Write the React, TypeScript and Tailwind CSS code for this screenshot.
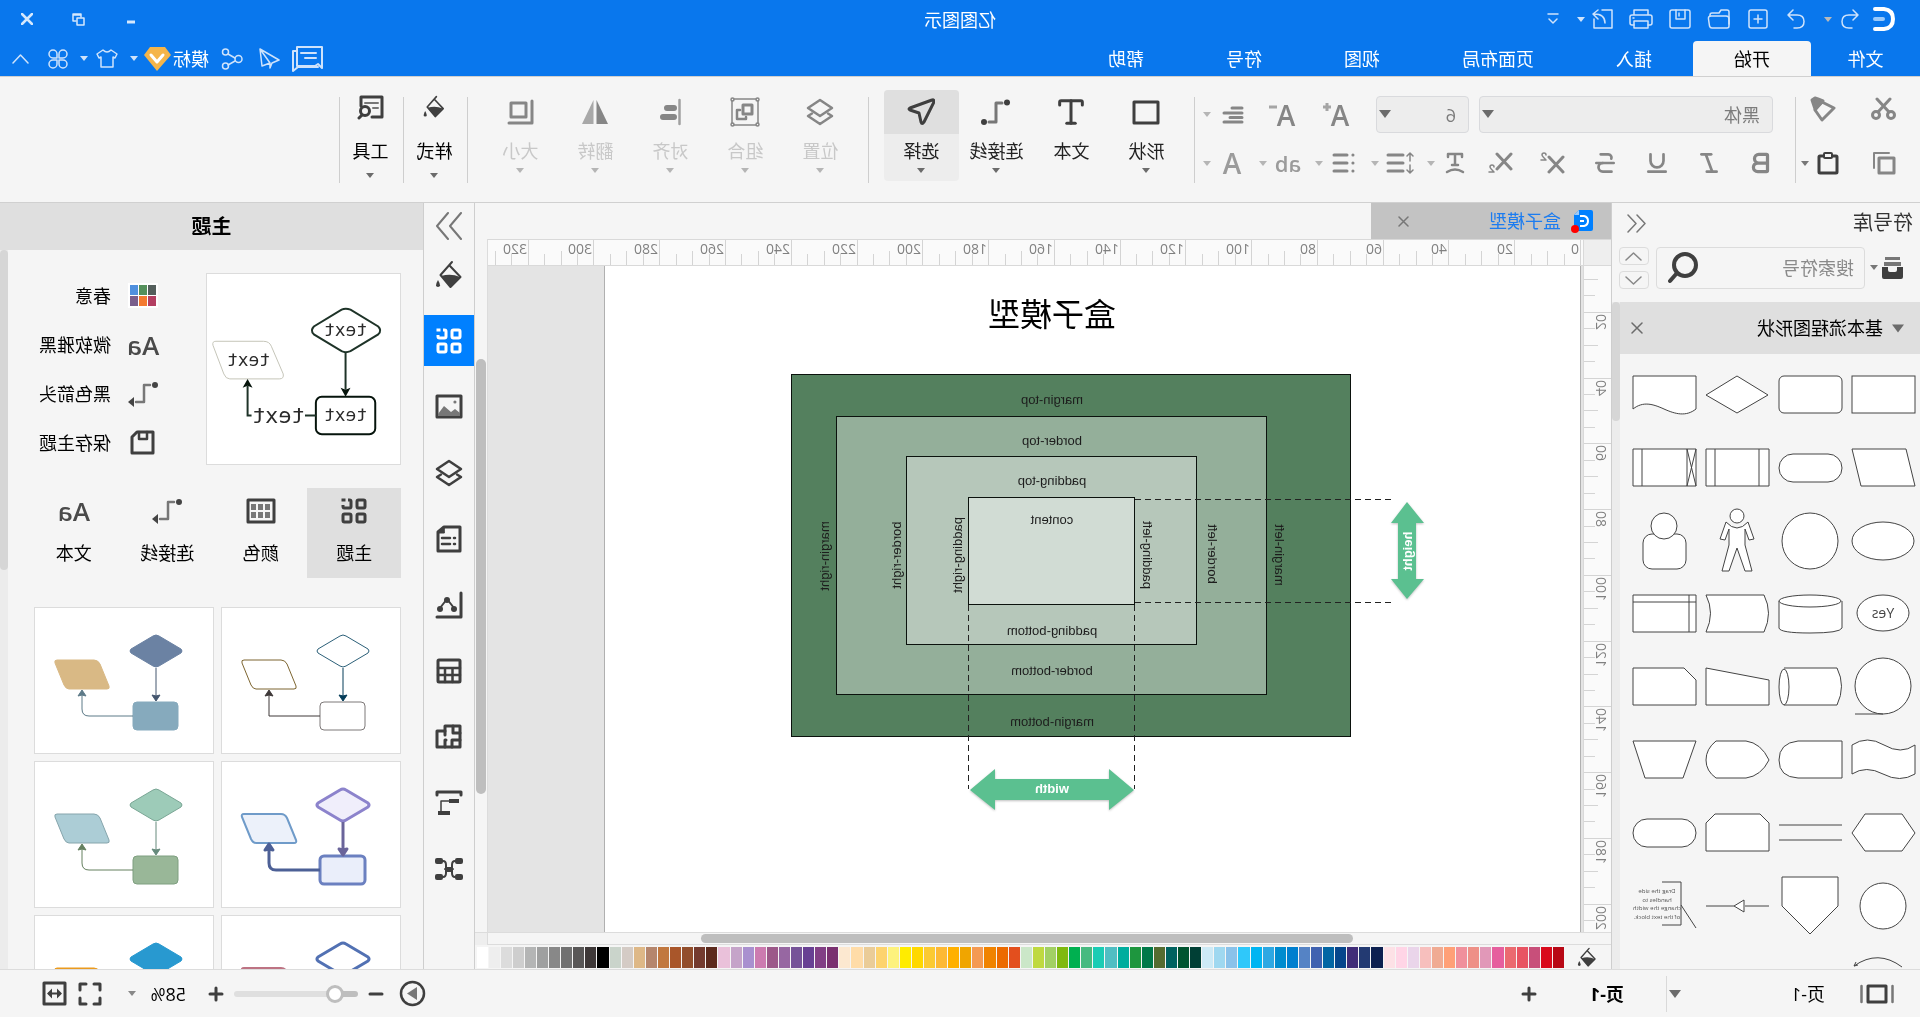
import { useState } from "react";
import type { ReactNode } from "react";
import clsx from "clsx";
import { Bold, Italic, Strikethrough, Type, Underline } from "lucide-react";

/* ---------- small helpers ---------- */

type SvgProps = {
  w?: number;
  h?: number;
  sw?: number;
  className?: string;
  children: ReactNode;
};

function Svg({ w = 24, h = 24, sw = 2, className, children }: SvgProps) {
  return (
    <svg
      width={w}
      height={h}
      viewBox={`0 0 ${w} ${h}`}
      fill="none"
      stroke="currentColor"
      strokeWidth={sw}
      strokeLinecap="round"
      strokeLinejoin="round"
      className={clsx("shrink-0", className)}
      aria-hidden="true"
    >
      {children}
    </svg>
  );
}

function Caret({ className }: { className?: string }) {
  return (
    <svg width="8" height="5" viewBox="0 0 8 5" className={clsx("shrink-0", className)} aria-hidden="true">
      <path d="M0 0h8L4 5z" fill="currentColor" />
    </svg>
  );
}

function BigCaret({ className }: { className?: string }) {
  return (
    <svg width="12" height="8" viewBox="0 0 12 8" className={clsx("shrink-0", className)} aria-hidden="true">
      <path d="M0 0h12L6 8z" fill="currentColor" />
    </svg>
  );
}

function IconButton({ label, className, children }: { label: string; className?: string; children: ReactNode }) {
  return (
    <button aria-label={label} className={clsx("flex shrink-0 items-center justify-center", className)}>
      {children}
    </button>
  );
}

/* ---------- icons ---------- */

const Bucket = ({ className }: { className?: string }) => (
  <Svg w={26} h={30} sw={2} className={className}>
    <path d="M10 2l11.500 13L11.500 27 1.500 17 12 6" />
    <path d="M2 17q9-4 19-1l-9.500 11z" fill="currentColor" stroke="none" />
    <path d="M24 20q4 7 0 7t0-7" fill="currentColor" stroke="none" />
  </Svg>
);

const GridFour = () => (
  <Svg w={26} h={26} sw={3}>
    <rect x="2" y="2" width="8" height="8" rx="1.500" />
    <path d="M19 2h-1.500q-1.500 0-1.500 1.500v5q0 1.500 1.500 1.500h5q1.500 0 1.500-1.500V7" strokeLinecap="butt" />
    <path d="M23 2h1" strokeLinecap="square" />
    <rect x="2" y="16" width="8" height="8" rx="1.500" />
    <rect x="16" y="16" width="8" height="8" rx="1.500" />
  </Svg>
);

const Layers = () => (
  <Svg w={28} h={28} sw={2.5}>
    <path d="M14 2l12 8-12 8L2 10z" />
    <path d="M6 15.500L2 18l12 8 12-8-4-2.500" />
  </Svg>
);

const LetterPair = () => (
  <span className="font-['Open_Sans',sans-serif] text-[26px] leading-6 font-semibold text-[#4a4a4a]">Aa</span>
);

const ConnectorArrow = () => (
  <Svg w={32} h={26} sw={2.5}>
    <circle cx="4" cy="4" r="3" fill="#444" stroke="none" />
    <path d="M9 4h6v17h8" stroke="#777" />
    <path d="M25 16l6 5-6 5z" fill="#444" stroke="none" />
  </Svg>
);

/* ---------- title bar ---------- */

function TitleBar() {
  return (
    <div className="relative flex h-[38px] items-center pl-[18px] text-[#cfe3fb]">
      <div className="flex w-9 justify-center">
        <Svg w={22} h={24} sw={4}>
          <path d="M20 2H11Q2 3 2 12t9 10h9" stroke="#fff" />
          <path d="M12 12h8" stroke="#9ccafa" />
        </Svg>
      </div>
      <IconButton label="撤销" className="w-8">
        <Svg w={18} h={20} sw={1.5}>
          <path d="M6 1L1 6l5 5M1 6h9q7 0 7 6.500T10 19H7" />
        </Svg>
      </IconButton>
      <Caret className="mr-2 w-3 text-[#b9b9b9]" />
      <IconButton label="恢复" className="w-9">
        <Svg w={18} h={20} sw={1.5}>
          <path d="M12 1l5 5-5 5M17 6H8q-7 0-7 6.500T8 19h3" />
        </Svg>
      </IconButton>
      <IconButton label="新建" className="w-[39px]">
        <Svg w={20} h={20} sw={1.5}>
          <rect x="1" y="1" width="18" height="18" rx="2" />
          <path d="M10 6v8M6 10h8" />
        </Svg>
      </IconButton>
      <IconButton label="打开" className="w-[39px]">
        <Svg w={24} h={20} sw={1.5}>
          <path d="M2 15V3q0-2 2-2h6l2 3h7q2 0 2 2v1" />
          <path d="M5 7h15q3 0 2.500 3l-1 7q-.5 2-2.500 2H4q-2 0-2-2V10q0-3 3-3z" />
        </Svg>
      </IconButton>
      <IconButton label="保存" className="w-[39px]">
        <Svg w={22} h={20} sw={1.5}>
          <rect x="1" y="1" width="20" height="18" rx="2" />
          <path d="M6 1v9h9V1M12 4v3" />
        </Svg>
      </IconButton>
      <IconButton label="打印" className="w-[39px]">
        <Svg w={24} h={20} sw={1.5}>
          <path d="M5 6V1h14v5M5 16H3q-2 0-2-2V8q0-2 2-2h18q2 0 2 2v6q0 2-2 2h-2" />
          <path d="M5 12h14v7H5zM19 9h1" />
        </Svg>
      </IconButton>
      <IconButton label="导出" className="w-[39px]">
        <Svg w={21} h={20} sw={1.5}>
          <path d="M11 1H1v18h18v-9" />
          <path d="M8 14q0-9 11-9M15 1l5 4-5 5" />
        </Svg>
      </IconButton>
      <Caret className="-ml-1 w-3" />
      <IconButton label="自定义快速访问工具栏" className="w-11">
        <Svg w={12} h={12} sw={1.5}>
          <path d="M1 1h10M2 6l4 4 4-4" />
        </Svg>
      </IconButton>

      <h1 className="absolute inset-x-0 top-[10px] text-center text-lg leading-5 text-white">亿图图示</h1>

      <div className="ml-auto flex items-center pr-px text-[#d5e8fd]">
        <IconButton label="最小化" className="w-[52px]">
          <Svg w={12} h={12} sw={3}>
            <path d="M2 9h8" strokeLinecap="butt" />
          </Svg>
        </IconButton>
        <IconButton label="还原" className="w-[52px]">
          <Svg w={13} h={13} sw={1.5}>
            <rect x="1" y="5" width="7" height="7" />
            <path d="M4 4V1h8v7H9M4 2h8" />
          </Svg>
        </IconButton>
        <IconButton label="关闭" className="w-[52px]">
          <Svg w={12} h={12} sw={2.5}>
            <path d="M1 1l10 10M11 1L1 11" />
          </Svg>
        </IconButton>
      </div>
    </div>
  );
}

const MENU = ["文件", "开始", "插入", "页面布局", "视图", "符号", "帮助"];

function MenuBar() {
  const [tab, setTab] = useState("开始");
  return (
    <div className="flex h-[38px] items-end text-[#cfe3fb]">
      <nav className="flex">
        {MENU.map((name) => (
          <button
            key={name}
            onClick={() => setTab(name)}
            className={clsx(
              "h-[35px] rounded-t-sm text-lg leading-9",
              name === "文件" ? "w-[109px]" : "px-[41px]",
              name === tab ? "bg-[#f5f5f5] text-black" : "text-white",
            )}
          >
            {name}
          </button>
        ))}
      </nav>
      <div className="ml-auto flex h-[35px] items-center pr-3">
        <IconButton label="评论" className="mr-3">
          <Svg w={31} h={26} sw={2}>
            <path d="M1 22V1h25v19H8l-3-2z" />
            <path d="M26 5h4v20l-5-4H5M7 7h15M7 12h11" />
          </Svg>
        </IconButton>
        <IconButton label="发送" className="mr-4">
          <Svg w={21} h={21} sw={1.5}>
            <path d="M20 1L1 12l7 3 2 5v-5l8 3zM20 1L10 15" />
          </Svg>
        </IconButton>
        <IconButton label="分享" className="mr-3">
          <Svg w={22} h={22} sw={1.5}>
            <circle cx="4.500" cy="11" r="3.500" />
            <circle cx="17.500" cy="4" r="3" />
            <circle cx="17.500" cy="18" r="3" />
            <path d="M8 10l7-4M8 13l7 4" />
          </Svg>
        </IconButton>
        <button className="text-lg leading-5 text-white">模标</button>
        <Svg w={27} h={24} className="mr-[6px] ml-[2px]">
          <path d="M6 0h15l6 8-13 16L0 8z" fill="#f5b54a" stroke="none" />
          <path d="M8 8l6 7 6-7" stroke="#fff" strokeWidth="3" />
        </Svg>
        <Caret className="mr-3" />
        <IconButton label="皮肤" className="mr-2">
          <Svg w={22} h={19} sw={1.5}>
            <path d="M7 1L1 5l2 4 2-1v10h12V8l2 1 2-4-6-4q-4 4-8 0z" />
          </Svg>
        </IconButton>
        <Caret className="mr-3" />
        <IconButton label="应用" className="mr-[19px]">
          <Svg w={20} h={20} sw={1.5}>
            <path d="M9 9H5a4 4 0 1 1 4-4zM11 9V5a4 4 0 1 1 4 4zM9 11v4a4 4 0 1 1-4-4zM11 11h4a4 4 0 1 1-4 4z" />
          </Svg>
        </IconButton>
        <IconButton label="收起功能区">
          <Svg w={17} h={10} sw={1.5}>
            <path d="M1 9l7.500-8L16 9" />
          </Svg>
        </IconButton>
      </div>
    </div>
  );
}

/* ---------- ribbon ---------- */

function Divider() {
  return <div className="mt-px h-[86px] w-px shrink-0 bg-[#cecece]" />;
}

function ClipboardGroup() {
  return (
    <div className="flex w-[124px] flex-col gap-[30px] pt-px pl-6 text-[#868686]">
      <div className="flex h-6 items-center justify-between pr-[14px]">
        <IconButton label="剪切">
          <Svg w={25} h={24} sw={3}>
            <circle cx="5" cy="18" r="3.500" />
            <circle cx="20" cy="18" r="3.500" />
            <path d="M7 15L19 2M18 15L6 2" />
          </Svg>
        </IconButton>
        <IconButton label="格式刷">
          <Svg w={26} h={26} sw={3}>
            <path d="M2 12l12-6 7 8-7 10z" />
            <path d="M13 5l8 8 2-6 1-3-3-2-3 1z" fill="currentColor" />
          </Svg>
        </IconButton>
      </div>
      <div className="flex h-6 items-center">
        <IconButton label="复制">
          <Svg w={24} h={23} sw={3}>
            <rect x="2" y="6" width="15" height="15" />
            <path d="M7 1h15v15" strokeWidth="2" />
          </Svg>
        </IconButton>
        <IconButton label="粘贴" className="ml-[33px] text-[#3f3f3f]">
          <Svg w={23} h={24} sw={3}>
            <rect x="2" y="5" width="18" height="17" rx="1" />
            <rect x="7" y="2" width="8" height="5" rx="1" fill="#f5f5f5" strokeWidth="2" />
          </Svg>
        </IconButton>
        <Caret className="ml-[7px] text-[#777]" />
      </div>
    </div>
  );
}

const FORMAT_BUTTONS: { label: string; icon: ReactNode }[] = [
  { label: "加粗", icon: <Bold size={26} strokeWidth={3} /> },
  { label: "倾斜", icon: <Italic size={26} strokeWidth={2.5} /> },
  { label: "下划线", icon: <Underline size={26} strokeWidth={2.5} /> },
  { label: "删除线", icon: <Strikethrough size={26} strokeWidth={2.5} /> },
  {
    label: "上标",
    icon: (
      <Svg w={25} h={22} sw={3}>
        <path d="M2 5l14 15M16 5L2 20" />
        <path d="M19 3q0-2 2-2t2 2q0 1-4 5h5" strokeWidth="1.500" />
      </Svg>
    ),
  },
  {
    label: "下标",
    icon: (
      <Svg w={25} h={22} sw={3}>
        <path d="M2 2l14 15M16 2L2 17" />
        <path d="M19 15q0-2 2-2t2 2q0 1-4 5h5" strokeWidth="1.500" />
      </Svg>
    ),
  },
];

const faded = "text-[#b5b5b5]";
const letter = "font-['Open_Sans',sans-serif] text-[28px] leading-6 font-semibold";

function FontGroup() {
  return (
    <div className="flex w-[600px] flex-col gap-[18px] text-[#868686]">
      <div className="flex h-[37px] items-center pl-[22px]">
        <div className="relative mr-[10px] h-full w-[294px]">
          <select
            aria-label="字体"
            className="h-full w-full appearance-none rounded-sm border border-[#d9dadd] bg-[#ededed] pl-3 text-lg text-[#7c7c7c]"
          >
            <option>黑体</option>
          </select>
          <BigCaret className="pointer-events-none absolute top-[14px] right-[3px] text-[#6b6b6b]" />
        </div>
        <div className="relative h-full w-[93px]">
          <select
            aria-label="字号"
            className="h-full w-full appearance-none rounded-sm border border-[#d9dadd] bg-[#ededed] pl-3 text-lg text-[#7c7c7c]"
          >
            <option>6</option>
          </select>
          <BigCaret className="pointer-events-none absolute top-[14px] right-[3px] text-[#6b6b6b]" />
        </div>
        <button aria-label="增大字号" className={clsx("ml-[13px] flex w-[54px] justify-center", letter)}>
          A
          <Svg w={8} h={8} className="text-[#a5a5a5]">
            <path d="M4 0v8M0 4h8" strokeLinecap="butt" strokeWidth="3" />
          </Svg>
        </button>
        <button aria-label="减小字号" className={clsx("flex w-[54px] justify-center", letter)}>
          A
          <Svg w={8} h={8} className="text-[#a5a5a5]">
            <path d="M0 4h8" strokeLinecap="butt" strokeWidth="3" />
          </Svg>
        </button>
        <IconButton label="对齐方式" className="w-11">
          <Svg w={22} h={18} sw={3}>
            <path d="M2 2h10M2 7h18M2 11.500h12M2 16h18" />
          </Svg>
        </IconButton>
        <Caret className={faded} />
      </div>

      <div className="flex h-6 items-center pl-2">
        {FORMAT_BUTTONS.map((b) => (
          <IconButton key={b.label} label={b.label} className="w-[52px]">
            {b.icon}
          </IconButton>
        ))}
        <IconButton label="文字排列" className="w-10">
          <Svg w={20} h={22} sw={2.5}>
            <path d="M3 5V2h14v3M10 2v11M7 13h6M2 20q8-5 16 0" />
          </Svg>
        </IconButton>
        <Caret className={faded} />
        <IconButton label="行距" className="w-12 pl-[6px]">
          <Svg w={28} h={22} sw={3}>
            <path d="M11 3h15M11 11h15M11 19h15" />
            <path d="M4 9V2M1 4l3-3 3 3M4 13v7M1 18l3 3 3-3" strokeWidth="1.500" />
          </Svg>
        </IconButton>
        <Caret className={faded} />
        <IconButton label="项目符号" className="w-12 pl-[6px]">
          <Svg w={23} h={22} sw={3}>
            <path d="M8 3h13M8 11h13M8 19h13M2 3h.1M2 11h.1M2 19h.1" />
          </Svg>
        </IconButton>
        <Caret className={faded} />
        <button
          aria-label="突出显示"
          className="w-12 pl-[6px] text-center text-[22px] leading-6 font-semibold text-[#9b9b9b]"
        >
          ab
        </button>
        <Caret className={faded} />
        <button aria-label="字体颜色" className={clsx("w-12 pl-[6px] text-center text-[#9b9b9b]", letter)}>
          A
        </button>
        <Caret className={faded} />
      </div>
    </div>
  );
}

type Tool = { name: string; icon: ReactNode; caret?: boolean };

const DRAW_TOOLS: Tool[] = [
  {
    name: "形状",
    caret: true,
    icon: (
      <Svg w={28} h={25} sw={3}>
        <rect x="2" y="2" width="24" height="21" />
      </Svg>
    ),
  },
  { name: "文本", icon: <Type size={34} strokeWidth={3} absoluteStrokeWidth /> },
  {
    name: "连接线",
    caret: true,
    icon: (
      <Svg w={30} h={27} sw={3}>
        <circle cx="4" cy="3.500" r="3" fill="currentColor" stroke="none" />
        <path d="M9 4h6v19h7" stroke="#777" />
        <circle cx="27" cy="23" r="3" fill="currentColor" stroke="none" />
      </Svg>
    ),
  },
  {
    name: "选择",
    caret: true,
    icon: (
      <Svg w={28} h={28} sw={3}>
        <path d="M3 2l22 8q2 1 0 2l-9 3-2 9q-1 3-3 0L1 4q0-3 2-2z" />
      </Svg>
    ),
  },
];

const ARRANGE_TOOLS: Tool[] = [
  { name: "位置", caret: true, icon: <Layers /> },
  {
    name: "组合",
    caret: true,
    icon: (
      <Svg w={30} h={30} sw={1.5}>
        <path d="M4 2h22M4 28h22M2 4v22M28 4v22" />
        <circle cx="2.500" cy="2.500" r="1.500" />
        <circle cx="27.500" cy="2.500" r="1.500" />
        <circle cx="2.500" cy="27.500" r="1.500" />
        <circle cx="27.500" cy="27.500" r="1.500" />
        <rect x="8" y="8" width="9" height="9" strokeWidth="3" />
        <path d="M20 13h3v9h-9v-2" strokeWidth="2.500" />
      </Svg>
    ),
  },
  {
    name: "对齐",
    caret: true,
    icon: (
      <Svg w={22} h={28} sw={2}>
        <path d="M1.500 2v24" stroke="#a0a0a0" strokeWidth="2.500" />
        <path d="M7 10h7M7 19h11" strokeWidth="6" />
      </Svg>
    ),
  },
  {
    name: "翻转",
    caret: true,
    icon: (
      <Svg w={28} h={26}>
        <path d="M12.500 1v24H1z" fill="currentColor" stroke="none" />
        <path d="M15.500 1v24H27z" fill="#a8a8a8" stroke="none" />
      </Svg>
    ),
  },
  {
    name: "大小",
    caret: true,
    icon: (
      <Svg w={27} h={26} sw={3}>
        <path d="M2 2v22h23" />
        <rect x="8" y="4" width="15" height="14" />
      </Svg>
    ),
  },
];

type ToolButtonProps = { tool: Tool; active?: boolean; disabled?: boolean; onClick?: () => void };

function ToolButton({ tool, active, disabled, onClick }: ToolButtonProps) {
  return (
    <button
      onClick={onClick}
      className={clsx(
        "-mt-[6px] flex h-[91px] w-[75px] flex-col items-center overflow-hidden rounded-sm",
        active && "bg-[#ededed]",
        disabled && "text-[#868686]",
      )}
    >
      <span
        className={clsx(
          "flex h-11 w-full items-center justify-center",
          active && "bg-[#dfdfdf]",
          !disabled && "text-[#3f3f3f]",
        )}
      >
        {tool.icon}
      </span>
      <span className={clsx("mt-[7px] text-lg leading-5", disabled ? "text-[#c8c8c8]" : "text-[#222]")}>
        {tool.name}
      </span>
      {tool.caret && <Caret className={clsx("mt-[7px]", disabled ? "text-[#b5b5b5]" : "text-[#6b6b6b]")} />}
    </button>
  );
}

function Ribbon() {
  const [active, setActive] = useState("选择");
  return (
    <div className="flex h-[127px] border-y border-[#d0d0d0] bg-[#f5f5f5] pt-[19px]">
      <ClipboardGroup />
      <Divider />
      <FontGroup />
      <Divider />
      <div className="flex pr-[15px] pl-[10px]">
        {DRAW_TOOLS.map((t) => (
          <ToolButton key={t.name} tool={t} active={t.name === active} onClick={() => setActive(t.name)} />
        ))}
      </div>
      <Divider />
      <div className="flex pr-[15px] pl-[10px]">
        {ARRANGE_TOOLS.map((t) => (
          <ToolButton key={t.name} tool={t} disabled />
        ))}
      </div>
      <Divider />
      <button className="-mt-px flex w-[63px] flex-col items-center pl-[2px] text-black">
        <Bucket className="h-6 text-[#3f3f3f]" />
        <span className="mt-[22px] text-lg leading-5">样式</span>
        <Caret className="mt-3 text-[#6b6b6b]" />
      </button>
      <Divider />
      <button className="-mt-px flex w-[63px] flex-col items-center pl-[2px] text-black">
        <Svg w={27} h={25} sw={3} className="text-[#3f3f3f]">
          <path d="M2 2v20h10M2 2h21v9" />
          <path d="M6 8h13M6 13h5" strokeWidth="2" stroke="#777" />
          <circle cx="19" cy="16" r="4.500" />
          <path d="M22 20l3 3" />
        </Svg>
        <span className="mt-[21px] text-lg leading-5">工具</span>
        <Caret className="mt-3 text-[#6b6b6b]" />
      </button>
      <Divider />
    </div>
  );
}

/* ---------- symbol library ---------- */

const SHAPES: ReactNode[] = [
  <rect x="5" y="18" width="63" height="37" />,
  <rect x="5" y="18" width="63" height="37" rx="5" />,
  <path d="M37 18l31 19-31 18L6 37z" />,
  <path d="M5 18h63v33c-10-8-20-5-31 0s-22 8-32 0z" />,
  <path d="M14 18h54l-9 37H5z" />,
  <rect x="5" y="23" width="63" height="28" rx="14" />,
  <path d="M5 18h63v37H5zM15 18v37M59 18v37" />,
  <path d="M5 18h63v37H5zM14 18v37M59 18v37M5 18l9 37M14 18L5 55" />,
  <ellipse cx="37" cy="37" rx="31" ry="19" />,
  <circle cx="37" cy="37" r="28" />,
  <>
    <circle cx="37" cy="12" r="7" />
    <path d="M26 18q11 12 22 0l6 17-5 1-4-11v16l7 26h-7l-8-23-8 23h-7l7-26V25l-4 11-5-1z" />
  </>,
  <>
    <rect x="15" y="30" width="43" height="35" rx="9" />
    <circle cx="37" cy="22" r="13" />
  </>,
  <>
    <ellipse cx="37" cy="36" rx="26" ry="18" />
    <text x="37" y="41" textAnchor="middle" fontSize="14" fill="#444" stroke="none">
      Yes
    </text>
  </>,
  <>
    <path d="M5 24v27q2 5 32 5t31-5V24" />
    <ellipse cx="37" cy="24" rx="31" ry="6" />
  </>,
  <path d="M10 18h58q-9 18 0 37H10q-9-19 0-37z" />,
  <path d="M5 18h63v37H5zM12 18v37M5 25h63" />,
  <>
    <circle cx="37" cy="36" r="28" />
    <path d="M37 64h28" />
  </>,
  <>
    <path d="M63 18H10q-9 18 0 37h53" />
    <ellipse cx="63" cy="37" rx="5" ry="18" />
  </>,
  <path d="M5 30l63-12v37H5z" />,
  <path d="M17 18h51v37H5V30z" />,
  <path d="M5 22q14 10 31 0t32 0v29q-14-9-31 0t-32 0z" />,
  <path d="M5 18h44q19 2 19 19T49 55H5z" />,
  <path d="M5 37q8-17 23-19h30q10 8 10 19t-10 18H28Q13 53 5 37z" />,
  <path d="M5 18h63L56 55H18z" />,
  <path d="M5 37l13-19h37l13 19-13 18H18z" />,
  <path d="M5 29h63M5 44h63" />,
  <path d="M14 18h45l9 9v28H5V27z" />,
  <rect x="5" y="23" width="63" height="28" rx="14" />,
  <circle cx="37" cy="37" r="23" />,
  <path d="M9 8h56v29L37 65 9 37z" />,
  <path d="M5 37h24M40 37h28M30 31v12l10-6z" />,
  <>
    <path d="M39 13H20v43h19M20 36L5 59" fill="none" />
    <g fontSize="6" fill="#555" stroke="none" textAnchor="middle">
      <text x="44" y="24">Drag the side</text>
      <text x="44" y="33">handles to</text>
      <text x="44" y="41">change the width</text>
      <text x="44" y="50">of the text block.</text>
    </g>
  </>,
  <path d="M18 25q24-18 48-1l-4-1M66 24l-2-4" fill="none" />,
];

function SymbolLibrary() {
  return (
    <aside className="flex w-[309px] shrink-0 flex-col border-r border-[#cecece] bg-[#f5f5f5]">
      <div className="flex h-10 shrink-0 items-center justify-between pr-[14px] pl-[7px]">
        <h2 className="text-xl leading-6 text-[#333]">符号库</h2>
        <IconButton label="收起">
          <Svg w={20} h={19} sw={1.5} className="text-[#777]">
            <path d="M9 1L1 9.500 9 18M18 1l-8 8.500 8 8.500" />
          </Svg>
        </IconButton>
      </div>
      <div className="flex h-[59px] shrink-0 items-start pt-1 pr-[7px] pl-4">
        <IconButton label="符号库管理" className="mt-[10px]">
          <svg width="24" height="22" viewBox="0 0 24 22" aria-hidden="true">
            <path d="M4 0h15v3H4zM3 5h17v4H3z" fill="#777" />
            <path d="M1 10h6v3q0 2 2 2h5q2 0 2-2v-3h6v10q0 2-2 2H3q-2 0-2-2z" fill="#3f3f3f" />
          </svg>
        </IconButton>
        <Caret className="mt-[18px] ml-[2px] text-[#777]" />
        <label className="ml-[5px] flex h-[42px] min-w-0 flex-1 items-center rounded-sm border border-[#dcdcdc] pr-[11px]">
          <input
            aria-label="搜索符号"
            placeholder="搜索符号"
            className="w-full min-w-0 bg-transparent pl-[10px] text-lg outline-none placeholder:text-[#8a8a8a]"
          />
          <Svg w={31} h={33} sw={4} className="text-[#3f3f3f]">
            <circle cx="14" cy="13" r="11" />
            <path d="M22 21l7 8" />
          </Svg>
        </label>
        <div className="ml-[7px] flex flex-col gap-[6px]">
          <IconButton label="上一个" className="h-[18px] w-[30px] rounded-sm border border-[#dcdcdc]">
            <Svg w={17} h={9} sw={1.5} className="text-[#888]">
              <path d="M1 8l7.500-7L16 8" />
            </Svg>
          </IconButton>
          <IconButton label="下一个" className="h-[18px] w-[30px] rounded-sm border border-[#dcdcdc]">
            <Svg w={17} h={9} sw={1.5} className="text-[#888]">
              <path d="M1 1l7.500 7L16 1" />
            </Svg>
          </IconButton>
        </div>
      </div>
      <div className="flex min-h-0 flex-1">
        <div className="flex min-w-0 flex-1 flex-col">
          <div className="flex h-[52px] shrink-0 items-center bg-[#dfdfdf] pr-[11px] pl-4">
            <BigCaret className="h-[9px] text-[#6b6b6b]" />
            <h3 className="ml-[9px] flex-1 text-lg leading-5 text-black">基本流程图形状</h3>
            <IconButton label="关闭">
              <Svg w={12} h={12} sw={1.5} className="text-[#6b6b6b]">
                <path d="M1 1l10 10M11 1L1 11" />
              </Svg>
            </IconButton>
          </div>
          <div className="min-h-0 flex-1 overflow-hidden pt-1">
            <ul className="grid w-[292px] grid-cols-4">
              {SHAPES.map((shape, i) => (
                <li key={i}>
                  <svg width="73" height="73" viewBox="0 0 73 73" fill="#fff" stroke="#444">
                    {shape}
                  </svg>
                </li>
              ))}
            </ul>
          </div>
        </div>
        <div className="w-2 shrink-0 bg-[#ececec]">
          <div className="h-[119px] rounded-full bg-[#d6d6d6]" />
        </div>
      </div>
    </aside>
  );
}

/* ---------- canvas ---------- */

const STEP = 65.77; // px for 20 mm on the rulers

function ticks(count: number) {
  return Array.from({ length: count }, (_, i) => i);
}

function TopRuler() {
  return (
    <svg className="block h-[26px] w-full" fill="none" stroke="#d4d4d4">
      {ticks(67).map((i) => {
        const x = Math.round(2 + (i * STEP) / 4) + 0.5;
        return <path key={i} d={`M${x} ${i % 4 === 0 ? 0 : i % 2 === 0 ? 11 : 14}V26`} />;
      })}
      {ticks(17).map((i) => (
        <text key={i} x={Math.round(2 + i * STEP) + 2} y="14" fontSize="14" fill="#808080" stroke="none">
          {i * 20}
        </text>
      ))}
    </svg>
  );
}

function SideRuler() {
  return (
    <svg className="h-full w-[27px] shrink-0 bg-[#fafafa]" fill="none" stroke="#d4d4d4">
      {ticks(43).map((i) => {
        const y = Math.round((i * STEP) / 4 - 20) + 0.5;
        return <path key={i} d={`M${i % 4 === 0 ? 0 : i % 2 === 0 ? 13 : 16} ${y}H27`} />;
      })}
      {ticks(11)
        .slice(1)
        .map((i) => (
          <text
            key={i}
            transform={`translate(15 ${Math.round(i * STEP - 20) + 2}) rotate(-90)`}
            textAnchor="end"
            fontSize="14"
            fill="#808080"
            stroke="none"
          >
            {i * 20}
          </text>
        ))}
    </svg>
  );
}

function BoxModel() {
  return (
    <svg width="975" height="666" viewBox="0 0 975 666" className="text-[13px]" fill="#1d1d1d">
      <text x="528" y="60" textAnchor="middle" fontSize="32" fill="#000">
        盒子模型
      </text>
      <g stroke="#0b120d">
        <rect x="229.500" y="108.500" width="559" height="362" fill="#54805e" />
        <rect x="313.500" y="150.500" width="430" height="278" fill="#94af9a" />
        <rect x="383.500" y="190.500" width="290" height="188" fill="#b6c7ba" />
        <rect x="445.500" y="231.500" width="166" height="107" fill="#d1dcd4" />
      </g>
      <g stroke="#222" strokeDasharray="6 4">
        <path d="M445 233.500H188M445 336.500H188" />
        <path d="M445.500 339v184M611.500 339v184" />
      </g>
      <g className="font-['Liberation_Sans',sans-serif]" textAnchor="middle">
        <text x="528" y="138">margin-top</text>
        <text x="528" y="179">border-top</text>
        <text x="528" y="219">padding-top</text>
        <text x="528" y="258">content</text>
        <text x="528" y="369">padding-bottom</text>
        <text x="528" y="409">border-bottom</text>
        <text x="528" y="460">margin-bottom</text>
        <text transform="translate(305 289) rotate(-90)">margin-left</text>
        <text transform="translate(372 288) rotate(-90)">border-left</text>
        <text transform="translate(437 289) rotate(-90)">padding-left</text>
        <text transform="translate(618 289) rotate(90)">padding-right</text>
        <text transform="translate(679 289) rotate(90)">border-right</text>
        <text transform="translate(751 290) rotate(90)">margin-right</text>
      </g>
      <g fill="#5bc090" className="drop-shadow-[0_1px_1px_rgba(0,0,0,0.25)]">
        <path d="M446 524l25-21v10h114v-10l25 21-25 20v-10H471v10z" />
        <path d="M173 236l16 21h-7v56h7l-16 20-17-20h8v-56h-8z" />
      </g>
      <g fill="#fff" fontWeight="700" textAnchor="middle" className="font-['Liberation_Sans',sans-serif]">
        <text x="528" y="527">width</text>
        <text transform="translate(168 285) rotate(90)">height</text>
      </g>
    </svg>
  );
}

const PALETTE = [
  "#b80815", "#d90a1c", "#c84f7a", "#e85362", "#eb6a70", "#e65f9e", "#e198b8", "#ee9087", "#f0909c", "#ffa077",
  "#f0ab93", "#f7bfbd", "#ead5ea", "#ffd5e6", "#fde1e6", "#0d2050", "#233a72", "#412d78", "#06468c", "#0266a4",
  "#4062b0", "#5583c5", "#007fcf", "#008ccf", "#2da8e3", "#00b5f2", "#2fc8fa", "#8ac2ea", "#9fd8f0", "#cdeaf6",
  "#003f35", "#005430", "#006260", "#556c30", "#007848", "#1e963e", "#00ad9e", "#50bec3", "#1accb4", "#47ba80",
  "#00b050", "#7fb90f", "#a2d064", "#bfd940", "#cbe7c8", "#e34f1e", "#ec6a00", "#f08300", "#f49a53", "#f0a500",
  "#ffb000", "#fdb935", "#fbca33", "#ffd800", "#ffec00", "#fdf27d", "#fdd36e", "#eacc98", "#ffdca8", "#fce8d0",
  "#7a3070", "#823f85", "#684093", "#765398", "#9767a2", "#9c5889", "#cc7bb0", "#a990cf", "#c5a4c9", "#eac1da",
  "#5c2a1d", "#743b2f", "#924e2c", "#a9562a", "#c1783f", "#b5866d", "#deb887", "#d4cbc5", "#cad4cb", "#000000",
  "#3e3838", "#595757", "#717171", "#888888", "#9fa0a0", "#b4b5b5", "#cecece", "#dcdcdc", "#eeeeee", "#ffffff",
];

function Workspace() {
  return (
    <main className="flex min-w-0 flex-1 flex-col bg-[#f5f5f5]">
      <div className="flex h-9 shrink-0">
        <div className="flex w-[240px] items-center bg-[#c3c3c3] pl-[18px]">
          <svg width="22" height="23" viewBox="0 0 22 23" aria-hidden="true">
            <path d="M2 0h12l5 5v14q0 2-2 2H2q-2 0-2-2V2q0-2 2-2z" fill="#0080ff" />
            <path d="M14 0l5 5h-5z" fill="#9ccafa" />
            <path d="M13 6H9q-4 1-4 5t4 5h4M9 11h4" fill="none" stroke="#fff" strokeWidth="2" />
            <circle cx="18" cy="19" r="4" fill="#ff0000" />
          </svg>
          <span className="ml-[10px] text-lg leading-5 text-[#1c7cf0]">盒子模型</span>
          <IconButton label="关闭文档" className="ml-20">
            <Svg w={11} h={11} sw={1.5} className="text-[#777]">
              <path d="M1 1l9 9M10 1l-9 9" />
            </Svg>
          </IconButton>
        </div>
      </div>

      <div className="flex min-h-0 flex-1">
        <div className="flex min-w-0 flex-1 flex-col">
          <div className="flex h-[27px] shrink-0 border-y border-[#d9d9d9]">
            <div className="w-7 shrink-0 border-r border-[#d9d9d9] bg-[#eeeeee]" />
            <div className="min-w-0 flex-1 overflow-hidden bg-[#fafafa]">
              <TopRuler />
            </div>
          </div>
          <div className="flex min-h-0 flex-1">
            <SideRuler />
            <div className="flex min-w-0 flex-1 overflow-hidden border-l border-[#d9d9d9] bg-[#e4e4e4] pl-[2px]">
              <div className="shrink-0 border-x border-[#b0b0b0] bg-white">
                <BoxModel />
              </div>
            </div>
          </div>
          <div className="h-[13px] shrink-0 border-y border-[#dcdcdc] py-px">
            <div className="ml-[23%] h-full w-[58%] rounded-full bg-[#bebebe]" />
          </div>
        </div>
        <div className="flex w-[13px] shrink-0 flex-col border-l border-[#dcdcdc]">
          <div className="min-h-0 flex-1 px-px pt-[120px]">
            <div className="h-[76%] rounded-full bg-[#bebebe]" />
          </div>
          <div className="h-[13px] border-t border-[#dcdcdc] bg-[#eeeeee]" />
        </div>
      </div>

      <div className="flex h-6 shrink-0 items-center pl-[11px]">
        <IconButton label="填充颜色" className="mr-[10px] h-6 w-[26px]">
          <Bucket className="h-[21px] text-[#3f3f3f]" />
        </IconButton>
        <div className="flex h-[21px] flex-1">
          {PALETTE.map((color, i) => (
            <button
              key={i}
              aria-label={color}
              className="flex-1 border-r border-[#f5f5f5]"
              style={{ backgroundColor: color }}
            />
          ))}
        </div>
      </div>
    </main>
  );
}

/* ---------- right tool strip ---------- */

const SIDE_TOOLS: Tool[] = [
  { name: "填充", icon: <Bucket /> },
  { name: "主题", icon: <GridFour /> },
  {
    name: "图片",
    icon: (
      <Svg w={28} h={25} sw={3}>
        <rect x="2" y="2" width="24" height="21" />
        <path d="M3 22v-3l5-4 4 3 7-6 6 8v2z" fill="#777" stroke="none" />
        <path d="M8 8h.1" stroke="#777" />
      </Svg>
    ),
  },
  { name: "图层", icon: <Layers /> },
  {
    name: "页面",
    icon: (
      <Svg w={26} h={28} sw={3}>
        <path d="M2 2h16l6 5v19H2z" />
        <path d="M18 2l6 6h-6z" fill="currentColor" strokeWidth="1" />
        <path d="M7 13h1M12 13h8M7 19h1M12 19h8" strokeWidth="2.500" />
      </Svg>
    ),
  },
  {
    name: "图表",
    icon: (
      <Svg w={28} h={28} sw={3}>
        <path d="M2 2v24h24" />
        <path d="M9 17l7-9 7 9" strokeWidth="2" />
        <g fill="currentColor" stroke="none">
          <circle cx="9" cy="18" r="3" />
          <circle cx="16" cy="9" r="3" />
          <circle cx="23" cy="18" r="3" />
        </g>
      </Svg>
    ),
  },
  {
    name: "表格",
    icon: (
      <Svg w={26} h={26} sw={3}>
        <rect x="2" y="2" width="22" height="22" rx="1" />
        <path d="M2 10h22M2 17h22M9.500 10v14M17 10v14" strokeWidth="2.500" />
      </Svg>
    ),
  },
  {
    name: "平面图",
    icon: (
      <Svg w={27} h={25} sw={3}>
        <path d="M2 2h15v5h8v16H2z" />
        <path d="M9 2v7H2M17 7v4M2 16h8M10 16v7M17 16v7M17 16h-1" />
      </Svg>
    ),
  },
  {
    name: "甘特图",
    icon: (
      <Svg w={28} h={26} sw={3}>
        <path d="M2 5V2h24v3" />
        <path d="M4 11h10M13 23h12" strokeWidth="4" strokeLinecap="butt" />
        <path d="M14 11h8v10" strokeWidth="1.500" />
      </Svg>
    ),
  },
  {
    name: "思维导图",
    icon: (
      <Svg w={28} h={24} sw={2}>
        <path d="M4 4h4q3 0 3 4v8q0 4-3 4H4M24 4h-4q-3 0-3 4v8q0 4 3 4h4M10 12h8" />
        <g fill="currentColor" stroke="none">
          <rect x="0" y="1" width="8" height="6" rx="2" />
          <rect x="20" y="1" width="8" height="6" rx="2" />
          <rect x="0" y="17" width="8" height="6" rx="2" />
          <rect x="20" y="17" width="8" height="6" rx="2" />
          <rect x="10" y="10" width="8" height="5" rx="1" />
        </g>
      </Svg>
    ),
  },
];

function ToolStrip() {
  const [active, setActive] = useState("主题");
  return (
    <div className="flex w-[52px] shrink-0 flex-col items-center border-x border-[#cecece] bg-[#f5f5f5]">
      <IconButton label="展开" className="h-[46px] w-full">
        <Svg w={28} h={28} sw={2} className="text-[#777]">
          <path d="M2 1l11 13L2 27M15 1l11 13-11 13" />
        </Svg>
      </IconButton>
      <div className="flex w-full flex-col gap-[15px]">
        {SIDE_TOOLS.map((t) => (
          <button
            key={t.name}
            aria-label={t.name}
            onClick={() => setActive(t.name)}
            className={clsx(
              "flex h-[51px] w-full items-center justify-center",
              t.name === active ? "bg-[#0080ff] text-white" : "text-[#3f3f3f]",
            )}
          >
            {t.icon}
          </button>
        ))}
      </div>
    </div>
  );
}

/* ---------- theme panel ---------- */

type Theme = {
  diamond: [string, string];
  skew: [string, string];
  box: [string, string];
  down: string;
  up: string;
  sw: number;
  square?: boolean;
};

const THEMES: Theme[] = [
  { diamond: ["#fff", "#2b5f78"], skew: ["#fff", "#7d6530"], box: ["#fff", "#7d7878"], down: "#043c58", up: "#3e3838", sw: 1, square: true },
  { diamond: ["#6b82a3", "#6b82a3"], skew: ["#d9b985", "#d9b985"], box: ["#86aabd", "#86aabd"], down: "#44566e", up: "#5d7a88", sw: 1 },
  { diamond: ["#f0eefb", "#8c83cc"], skew: ["#ecf1fa", "#6f9bc9"], box: ["#eaeefa", "#6b80c0"], down: "#6a649a", up: "#4d6096", sw: 2 },
  { diamond: ["#9dcbb8", "#7aa695"], skew: ["#accdd6", "#86a5ac"], box: ["#99b798", "#7f9f80"], down: "#668a7c", up: "#64805f", sw: 1 },
  { diamond: ["#fff", "#5271b3"], skew: ["#f6dfe3", "#bd7383"], box: ["#fff", "#5271b3"], down: "#5271b3", up: "#bd7383", sw: 2 },
  { diamond: ["#2899d0", "#2899d0"], skew: ["#ea9a1e", "#ea9a1e"], box: ["#2899d0", "#2899d0"], down: "#2899d0", up: "#ea9a1e", sw: 1 },
];

function ThemeCard({ theme }: { theme: Theme }) {
  const heavy = theme.sw > 1 ? theme.sw + 1 : theme.sw;
  return (
    <button className="border border-[#dcdcdc] bg-white">
      <svg width="178" height="145" viewBox="0 0 178 145" className="block" strokeWidth={heavy} strokeLinejoin="round">
        <path
          d="M54 28q3-2 6 0l22 13q2 2 0 4L60 58q-3 2-6 0L32 45q-2-2 0-4z"
          fill={theme.diamond[0]}
          stroke={theme.diamond[1]}
        />
        <path
          d="M119 52h37q3 0 2 3l-9 22q-2 4-5 4h-38q-3 0-2-3l9-22q2-4 6-4z"
          fill={theme.skew[0]}
          stroke={theme.skew[1]}
          strokeWidth={theme.sw}
        />
        <rect x="35" y="94" width="45" height="28" rx="4" fill={theme.box[0]} stroke={theme.box[1]} />
        <path d="M57 60v28" stroke={theme.down} />
        <path d="M53 87l4 1 4-1-4 6z" fill={theme.down} stroke={theme.down} />
        <path d={theme.square ? "M80 108h51V86" : "M80 108h44q7 0 7-7V86"} fill="none" stroke={theme.up} />
        <path d="M127 88l4-6 4 6-4-1z" fill={theme.up} stroke={theme.up} />
      </svg>
    </button>
  );
}

function ThemePreview() {
  return (
    <svg
      width="195"
      height="192"
      viewBox="0 0 195 192"
      fill="#fff"
      strokeWidth="2"
      className="block shrink-0 border border-[#dcdcdc] bg-white font-['DejaVu_Sans_Mono',monospace]"
    >
      <path d="M50 36q5-2 9 0l28 17q4 4 0 8L59 78q-4 2-9 0L22 61q-4-4 0-8z" stroke="#1e3328" />
      <path d="M138 68h48q4 0 3 4l-11 29q-2 5-6 5h-50q-5 0-4-5l12-28q2-5 8-5z" stroke="#c4c4b8" strokeWidth="1" />
      <rect x="25" y="124" width="60" height="38" rx="6" stroke="#06140c" />
      <path d="M55 79v38M85 143h11M150 143h4v-30" stroke="#1e3328" fill="none" />
      <path d="M50 115l5 2 5-2-5 9zM149 115l5-9 5 9-5-2z" fill="#06140c" />
      <g fill="#2b2b2b" fontSize="18" textAnchor="middle">
        <text x="55" y="63">text</text>
        <text x="55" y="149">text</text>
        <text x="153" y="93">text</text>
        <text x="123" y="151" fontSize="22">
          text
        </text>
      </g>
    </svg>
  );
}

const SWATCH = ["#545f5c", "#54905c", "#4f90de", "#b33f62", "#f47a30", "#7a5f8c"];

const THEME_OPTIONS: Tool[] = [
  {
    name: "春意",
    icon: (
      <span className="grid grid-cols-3 gap-px border border-white bg-white p-px">
        {SWATCH.map((c) => (
          <span key={c} className="h-[10px] w-2" style={{ backgroundColor: c }} />
        ))}
      </span>
    ),
  },
  { name: "微软雅黑", icon: <LetterPair /> },
  { name: "黑色箭头", icon: <ConnectorArrow /> },
  {
    name: "保存主题",
    icon: (
      <Svg w={25} h={25} sw={3} className="text-[#3f3f3f]">
        <path d="M2 2h16l5 5v16H2z" />
        <path d="M8 2v7h8V2" strokeWidth="2.500" />
      </Svg>
    ),
  },
];

const THEME_TABS: Tool[] = [
  { name: "主题", icon: <GridFour /> },
  {
    name: "颜色",
    icon: (
      <Svg w={30} h={26} sw={3}>
        <rect x="2" y="2" width="26" height="22" />
        <path
          d="M6 6h5v6H6zM13 6h5v6h-5zM20 6h5v6h-5zM6 14h5v6H6zM13 14h5v6h-5zM20 14h5v6h-5z"
          fill="#777"
          stroke="none"
        />
      </Svg>
    ),
  },
  { name: "连接线", icon: <ConnectorArrow /> },
  { name: "文本", icon: <LetterPair /> },
];

function ThemePanel() {
  const [tab, setTab] = useState("主题");
  return (
    <aside className="flex w-[423px] shrink-0 flex-col bg-[#f5f5f5] text-black">
      <h2 className="h-[47px] shrink-0 bg-[#dfdfdf] text-center text-xl leading-[48px] font-bold">主题</h2>
      <div className="flex min-h-0 flex-1">
        <div className="min-w-0 flex-1 overflow-hidden pt-[23px] pl-[22px]">
          <div className="flex">
            <ThemePreview />
            <ul className="-mt-[2px] ml-[45px] flex flex-col">
              {THEME_OPTIONS.map((o) => (
                <li key={o.name}>
                  <button className="flex h-[49px] items-center">
                    <span className="mr-[14px] flex w-9 justify-center">{o.icon}</span>
                    <span className="text-lg leading-5">{o.name}</span>
                  </button>
                </li>
              ))}
            </ul>
          </div>
          <div className="mt-[21px] grid w-[374px] grid-cols-4">
            {THEME_TABS.map((t) => (
              <button
                key={t.name}
                onClick={() => setTab(t.name)}
                className={clsx(
                  "flex h-[90px] flex-col items-center text-[#3f3f3f]",
                  t.name === tab && "bg-[#dfdfdf]",
                )}
              >
                <span className="flex h-[46px] items-center">{t.icon}</span>
                <span className="mt-[9px] text-lg leading-5 text-black">{t.name}</span>
              </button>
            ))}
          </div>
          <div className="mt-[29px] grid w-[367px] grid-cols-2 gap-[7px]">
            {THEMES.map((t, i) => (
              <ThemeCard key={i} theme={t} />
            ))}
          </div>
        </div>
        <div className="w-2 shrink-0 bg-[#ececec]">
          <div className="h-[320px] rounded-full bg-[#d6d6d6]" />
        </div>
      </div>
    </aside>
  );
}

/* ---------- status bar ---------- */

function StatusBar() {
  const [zoom, setZoom] = useState(58);
  return (
    <footer className="flex h-12 shrink-0 items-center border-t border-[#dcdcdc] bg-[#f5f5f5] text-lg text-black">
      <div className="flex h-9 w-[254px] items-center border-r border-[#d9d9d9] pr-[2px] pl-[26px]">
        <Svg w={34} h={20} sw={3} className="mr-[35px] text-[#3f3f3f]">
          <path d="M1.500 2v16M32.500 2v16" strokeWidth="2.500" stroke="#777" />
          <rect x="8" y="2" width="18" height="16" />
        </Svg>
        <span className="leading-5">页-1</span>
        <BigCaret className="ml-auto text-[#6b6b6b]" />
      </div>
      <button className="ml-[42px] leading-5 font-bold">页-1</button>
      <IconButton label="新建页" className="ml-[53px]">
        <Svg w={16} h={16} sw={3} className="text-[#3f3f3f]">
          <path d="M8 2v12M2 8h12" />
        </Svg>
      </IconButton>

      <div className="ml-auto flex items-center pr-[42px] text-[#3f3f3f]">
        <IconButton label="演示" className="mr-[15px]">
          <Svg w={27} h={27} sw={2.5}>
            <circle cx="13.500" cy="13.500" r="11.500" />
            <path d="M9 7v13l10-6.500z" fill="#777" stroke="none" />
          </Svg>
        </IconButton>
        <IconButton label="缩小" className="mr-[10px]">
          <Svg w={16} h={16} sw={3}>
            <path d="M2 8h12" />
          </Svg>
        </IconButton>
        <input
          type="range"
          aria-label="缩放"
          min={0}
          max={450}
          value={zoom}
          onChange={(e) => setZoom(Number(e.target.value))}
          className="h-[18px] w-[124px] appearance-none bg-transparent [&::-webkit-slider-runnable-track]:h-[6px] [&::-webkit-slider-runnable-track]:rounded-full [&::-webkit-slider-runnable-track]:bg-[linear-gradient(to_right,#bebebe_18%,#dfdfdf_18%)] [&::-webkit-slider-thumb]:-mt-[6px] [&::-webkit-slider-thumb]:size-[18px] [&::-webkit-slider-thumb]:appearance-none [&::-webkit-slider-thumb]:rounded-full [&::-webkit-slider-thumb]:border-3 [&::-webkit-slider-thumb]:border-[#bebebe] [&::-webkit-slider-thumb]:bg-white"
        />
        <IconButton label="放大" className="ml-[10px]">
          <Svg w={16} h={16} sw={3}>
            <path d="M8 2v12M2 8h12" />
          </Svg>
        </IconButton>
        <span className="ml-[22px] w-[38px] leading-5 text-black">{zoom}%</span>
        <Caret className="ml-3 text-[#888]" />
        <IconButton label="全屏" className="ml-[26px]">
          <Svg w={24} h={24} sw={3}>
            <path d="M2 8V2h6M16 2h6v6M22 16v6h-6M8 22H2v-6" />
          </Svg>
        </IconButton>
        <IconButton label="适合页面" className="ml-[11px]">
          <Svg w={25} h={25} sw={3}>
            <rect x="2" y="2" width="21" height="21" />
            <path d="M7 12.500h11" strokeWidth="2" />
            <path d="M5 12.500l5-5v10zM20 12.500l-5-5v10z" fill="currentColor" stroke="none" />
          </Svg>
        </IconButton>
      </div>
    </footer>
  );
}

export default function App() {
  return (
    <div className="flex h-screen -scale-x-100 flex-col overflow-hidden bg-[#f5f5f5] font-['Open_Sans','Noto_Sans_CJK_SC',sans-serif]">
      <header className="shrink-0">
        <div className="bg-[#0977ed]">
          <TitleBar />
          <MenuBar />
        </div>
        <Ribbon />
      </header>
      <div className="flex min-h-0 flex-1">
        <SymbolLibrary />
        <Workspace />
        <ToolStrip />
        <ThemePanel />
      </div>
      <StatusBar />
    </div>
  );
}
